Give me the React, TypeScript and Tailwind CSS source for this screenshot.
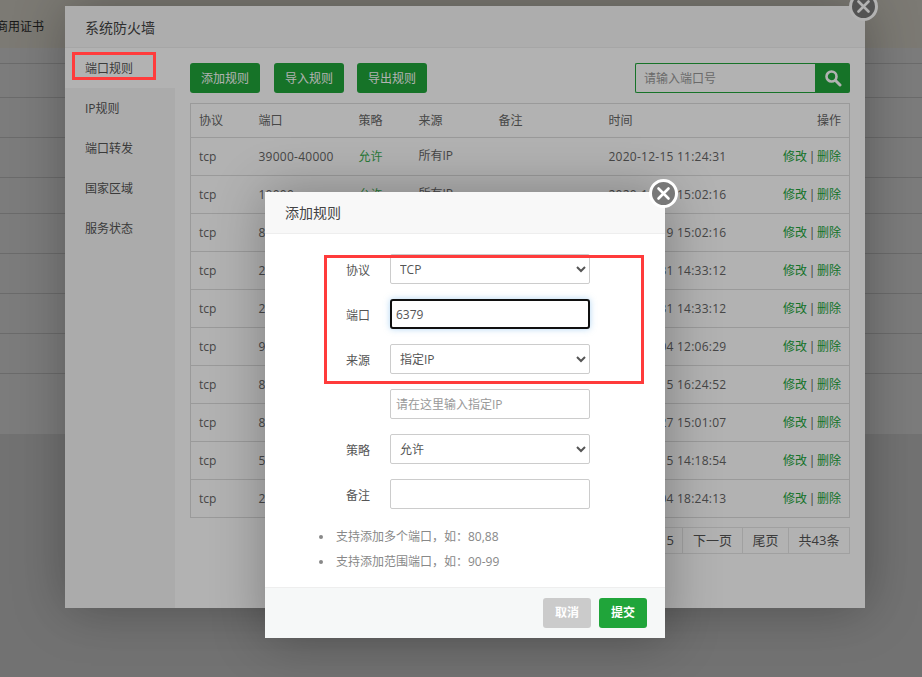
import React from "react";

const rows = [
  ["39000-40000", "2020-12-15 11:24:31"],
  ["10000", "2020-12-19 15:02:16"],
  ["8888", "2020-12-19 15:02:16"],
  ["21", "2020-12-31 14:33:12"],
  ["22", "2020-12-31 14:33:12"],
  ["9200", "2021-01-04 12:06:29"],
  ["8080", "2021-01-15 16:24:52"],
  ["8000", "2021-01-27 15:01:07"],
  ["5000", "2021-03-15 14:18:54"],
  ["2222", "2021-04-04 18:24:13"],
];

function CloseBtn({ className }: { className: string }) {
  return (
    <button className={"absolute flex h-[29px] w-[29px] items-center justify-center rounded-full border-[3px] border-white bg-[#787878] " + className}>
      <svg width="15" height="15" viewBox="0 0 15 15">
        <path d="M2.5 2.5 L12.5 12.5 M12.5 2.5 L2.5 12.5" stroke="#fff" strokeWidth="2.6" strokeLinecap="round" />
      </svg>
    </button>
  );
}

function Green({ children }: { children: React.ReactNode }) {
  return (
    <button className="flex h-[30px] w-[70px] items-center justify-center rounded-[3px] bg-[#20a53a] pt-[2px] text-xs text-white">
      {children}
    </button>
  );
}

function Row({ label, children }: { label: string; children?: React.ReactNode }) {
  return (
    <div className="mb-[15px] flex h-[30px] items-center">
      <label className="w-[105px] pr-5 pt-[4px] text-right text-xs text-[#555]">{label}</label>
      {children}
    </div>
  );
}

const fieldCls = "h-[30px] w-[200px] rounded-[2px] border border-[#ccc] bg-white px-[5px] text-xs text-[#555] outline-none placeholder:text-[#999]";

export default function App() {
  return (
    <div
      className="relative h-[677px] w-[922px] overflow-hidden bg-[#ebebeb] text-xs"
      style={{ fontFamily: '"Open Sans","Noto Sans CJK SC",sans-serif' }}
    >
      {/* page behind */}
      <div className="flex h-[48px] items-center bg-[#fffbee] pl-[44px] text-[#333]">
        <span className="-ml-[48px] mt-[6px] text-xs whitespace-nowrap">商用证书</span>
      </div>
      <div className="bg-white">
        {[16, 34, 40, 40, 36, 40, 40, 40, 40].map((h, i) => (
          <div key={i} className="border-b border-[#ddd]" style={{ height: h }} />
        ))}
        <div className="h-[60px]" />
      </div>

      {/* first shade */}
      <div className="absolute inset-0 bg-black/30" />

      {/* firewall window */}
      <div className="absolute left-[65px] top-[6px] flex h-[602px] w-[800px] flex-col bg-white shadow-[1px_1px_50px_rgba(0,0,0,0.3)]">
        <div className="flex h-[42px] shrink-0 items-center border-b border-[#eee] bg-[#f8f8f8] pl-5 pt-[2px] text-sm text-[#444]">
          系统防火墙
        </div>
        <CloseBtn className="-right-[13px] -top-[14px]" />
        <div className="flex min-h-0 flex-1">
          <nav className="w-[110px] shrink-0 bg-[#f5f5f5] text-xs text-[#555]">
            <div className="flex h-10 items-center bg-white pl-5 pt-[2px]">端口规则</div>
            <div className="flex h-10 items-center pl-5 pt-[2px]">IP规则</div>
            <div className="flex h-10 items-center pl-5 pt-[2px]">端口转发</div>
            <div className="flex h-10 items-center pl-5 pt-[2px]">国家区域</div>
            <div className="flex h-10 items-center pl-5 pt-[2px]">服务状态</div>
          </nav>
          <main className="flex-1 px-[15px] pt-[15px] text-[#666]">
            <div className="flex h-[30px] items-center">
              <Green>添加规则</Green>
              <div className="w-[14px]" />
              <Green>导入规则</Green>
              <div className="w-[13px]" />
              <Green>导出规则</Green>
              <div className="ml-auto flex h-[30px] w-[215px]">
                <input
                  placeholder="请输入端口号"
                  className="min-w-0 flex-1 rounded-l-[2px] border border-r-0 border-[#20a53a] bg-white px-2 pt-[2px] text-xs outline-none placeholder:text-[#999]"
                />
                <button className="flex w-[35px] items-center justify-center rounded-r-[2px] bg-[#20a53a]">
                  <svg width="18" height="18" viewBox="0 0 18 18" fill="none">
                    <circle cx="7.5" cy="7.5" r="5" stroke="#fff" strokeWidth="2.6" />
                    <path d="M11.5 11.5 L16 16" stroke="#fff" strokeWidth="3" strokeLinecap="round" />
                  </svg>
                </button>
              </div>
            </div>
            <table className="mt-[10px] w-[660px] table-fixed border-collapse border border-[#ddd] text-left text-xs">
              <thead>
                <tr className="h-[34px] border-b border-[#ddd]">
                  <th className="w-[60px] px-2 font-normal">协议</th>
                  <th className="w-[100px] px-2 font-normal">端口</th>
                  <th className="w-[60px] px-2 font-normal">策略</th>
                  <th className="w-[80px] px-2 font-normal">来源</th>
                  <th className="w-[110px] px-2 font-normal">备注</th>
                  <th className="w-[140px] px-2 font-normal">时间</th>
                  <th className="px-2 text-right font-normal">操作</th>
                </tr>
              </thead>
              <tbody>
                {rows.map((r, i) => (
                  <tr key={i} className="h-[38px] border-b border-[#ddd]">
                    <td className="px-2">tcp</td>
                    <td className="px-2 tracking-[0.25px]">{r[0]}</td>
                    <td className="px-2 text-[#3aae50]">允许</td>
                    <td className="px-2 pb-[2px]">所有IP</td>
                    <td className="px-2" />
                    <td className="whitespace-nowrap px-2 tracking-[0.25px]">{r[1]}</td>
                    <td className="whitespace-nowrap px-2 text-right">
                      <a className="text-[#20a53a]">修改</a>
                      <span className="mx-[1.7px] text-[#555]">|</span>
                      <a className="text-[#20a53a]">删除</a>
                    </td>
                  </tr>
                ))}
              </tbody>
            </table>
            <div className="mt-[9px] flex h-[27px] justify-end text-[13px] text-[#555]">
              <div className="flex border border-[#e5e5e5]">
                <span className="flex items-center px-2">5</span>
                <span className="flex w-[60px] items-center justify-center border-l border-[#e5e5e5]">下一页</span>
                <span className="flex w-[46px] items-center justify-center border-l border-[#e5e5e5]">尾页</span>
                <span className="flex w-[61px] items-center justify-center border-l border-[#e5e5e5]">共43条</span>
              </div>
            </div>
          </main>
        </div>
      </div>

      {/* second shade */}
      <div className="absolute inset-0 bg-black/30" />

      {/* add-rule dialog */}
      <div className="absolute left-[265px] top-[192px] flex h-[446px] w-[400px] flex-col bg-white shadow-[1px_1px_50px_rgba(0,0,0,0.3)]">
        <div className="flex h-[42px] shrink-0 items-center border-b border-[#eee] bg-[#f8f8f8] pl-5 text-sm text-[#444]">
          添加规则
        </div>
        <CloseBtn className="-right-[13px] -top-[13px]" />
        <div className="flex-1 pl-5 pt-5">
          <Row label="协议">
            <select className={fieldCls} defaultValue="TCP">
              <option>TCP</option>
            </select>
          </Row>
          <Row label="端口">
            <input
              defaultValue="6379"
              className="h-[30px] w-[200px] rounded-[3px] border-2 border-[#101010] bg-white px-1 text-xs text-[#555] shadow-[0_0_6px_rgba(102,175,233,0.5)] outline-none"
            />
          </Row>
          <Row label="来源">
            <select className={fieldCls} defaultValue="指定IP">
              <option>指定IP</option>
            </select>
          </Row>
          <Row label="">
            <input className={fieldCls} placeholder="请在这里输入指定IP" />
          </Row>
          <Row label="策略">
            <select className={fieldCls} defaultValue="允许">
              <option>允许</option>
            </select>
          </Row>
          <Row label="备注">
            <input className={fieldCls} />
          </Row>
          <ul className="ml-[34px] mt-[15px] text-xs leading-[25px] text-[#888]">
            <li className="flex items-center">
              <span className="mr-[13px] h-[4px] w-[4px] rounded-full bg-[#888]" />
              支持添加多个端口，如：80,88
            </li>
            <li className="flex items-center">
              <span className="mr-[13px] h-[4px] w-[4px] rounded-full bg-[#888]" />
              支持添加范围端口，如：90-99
            </li>
          </ul>
        </div>
        <div className="flex h-[51px] shrink-0 items-center justify-end gap-2 border-t border-[#eee] bg-[#f6f8f8] pr-[18px]">
          <button className="h-[30px] w-[48px] rounded-[3px] bg-[#cbcbcb] text-xs font-bold text-white">取消</button>
          <button className="h-[30px] w-[48px] rounded-[3px] bg-[#20a53a] text-xs font-bold text-white">提交</button>
        </div>
      </div>

      {/* red annotations */}
      <div className="absolute left-[72px] top-[52px] h-[28px] w-[84px] border-[3px] border-[#ff3b3b]" />
      <div className="absolute left-[324px] top-[255px] h-[129px] w-[320px] border-[3px] border-[#ff3b3b]" />
    </div>
  );
}
